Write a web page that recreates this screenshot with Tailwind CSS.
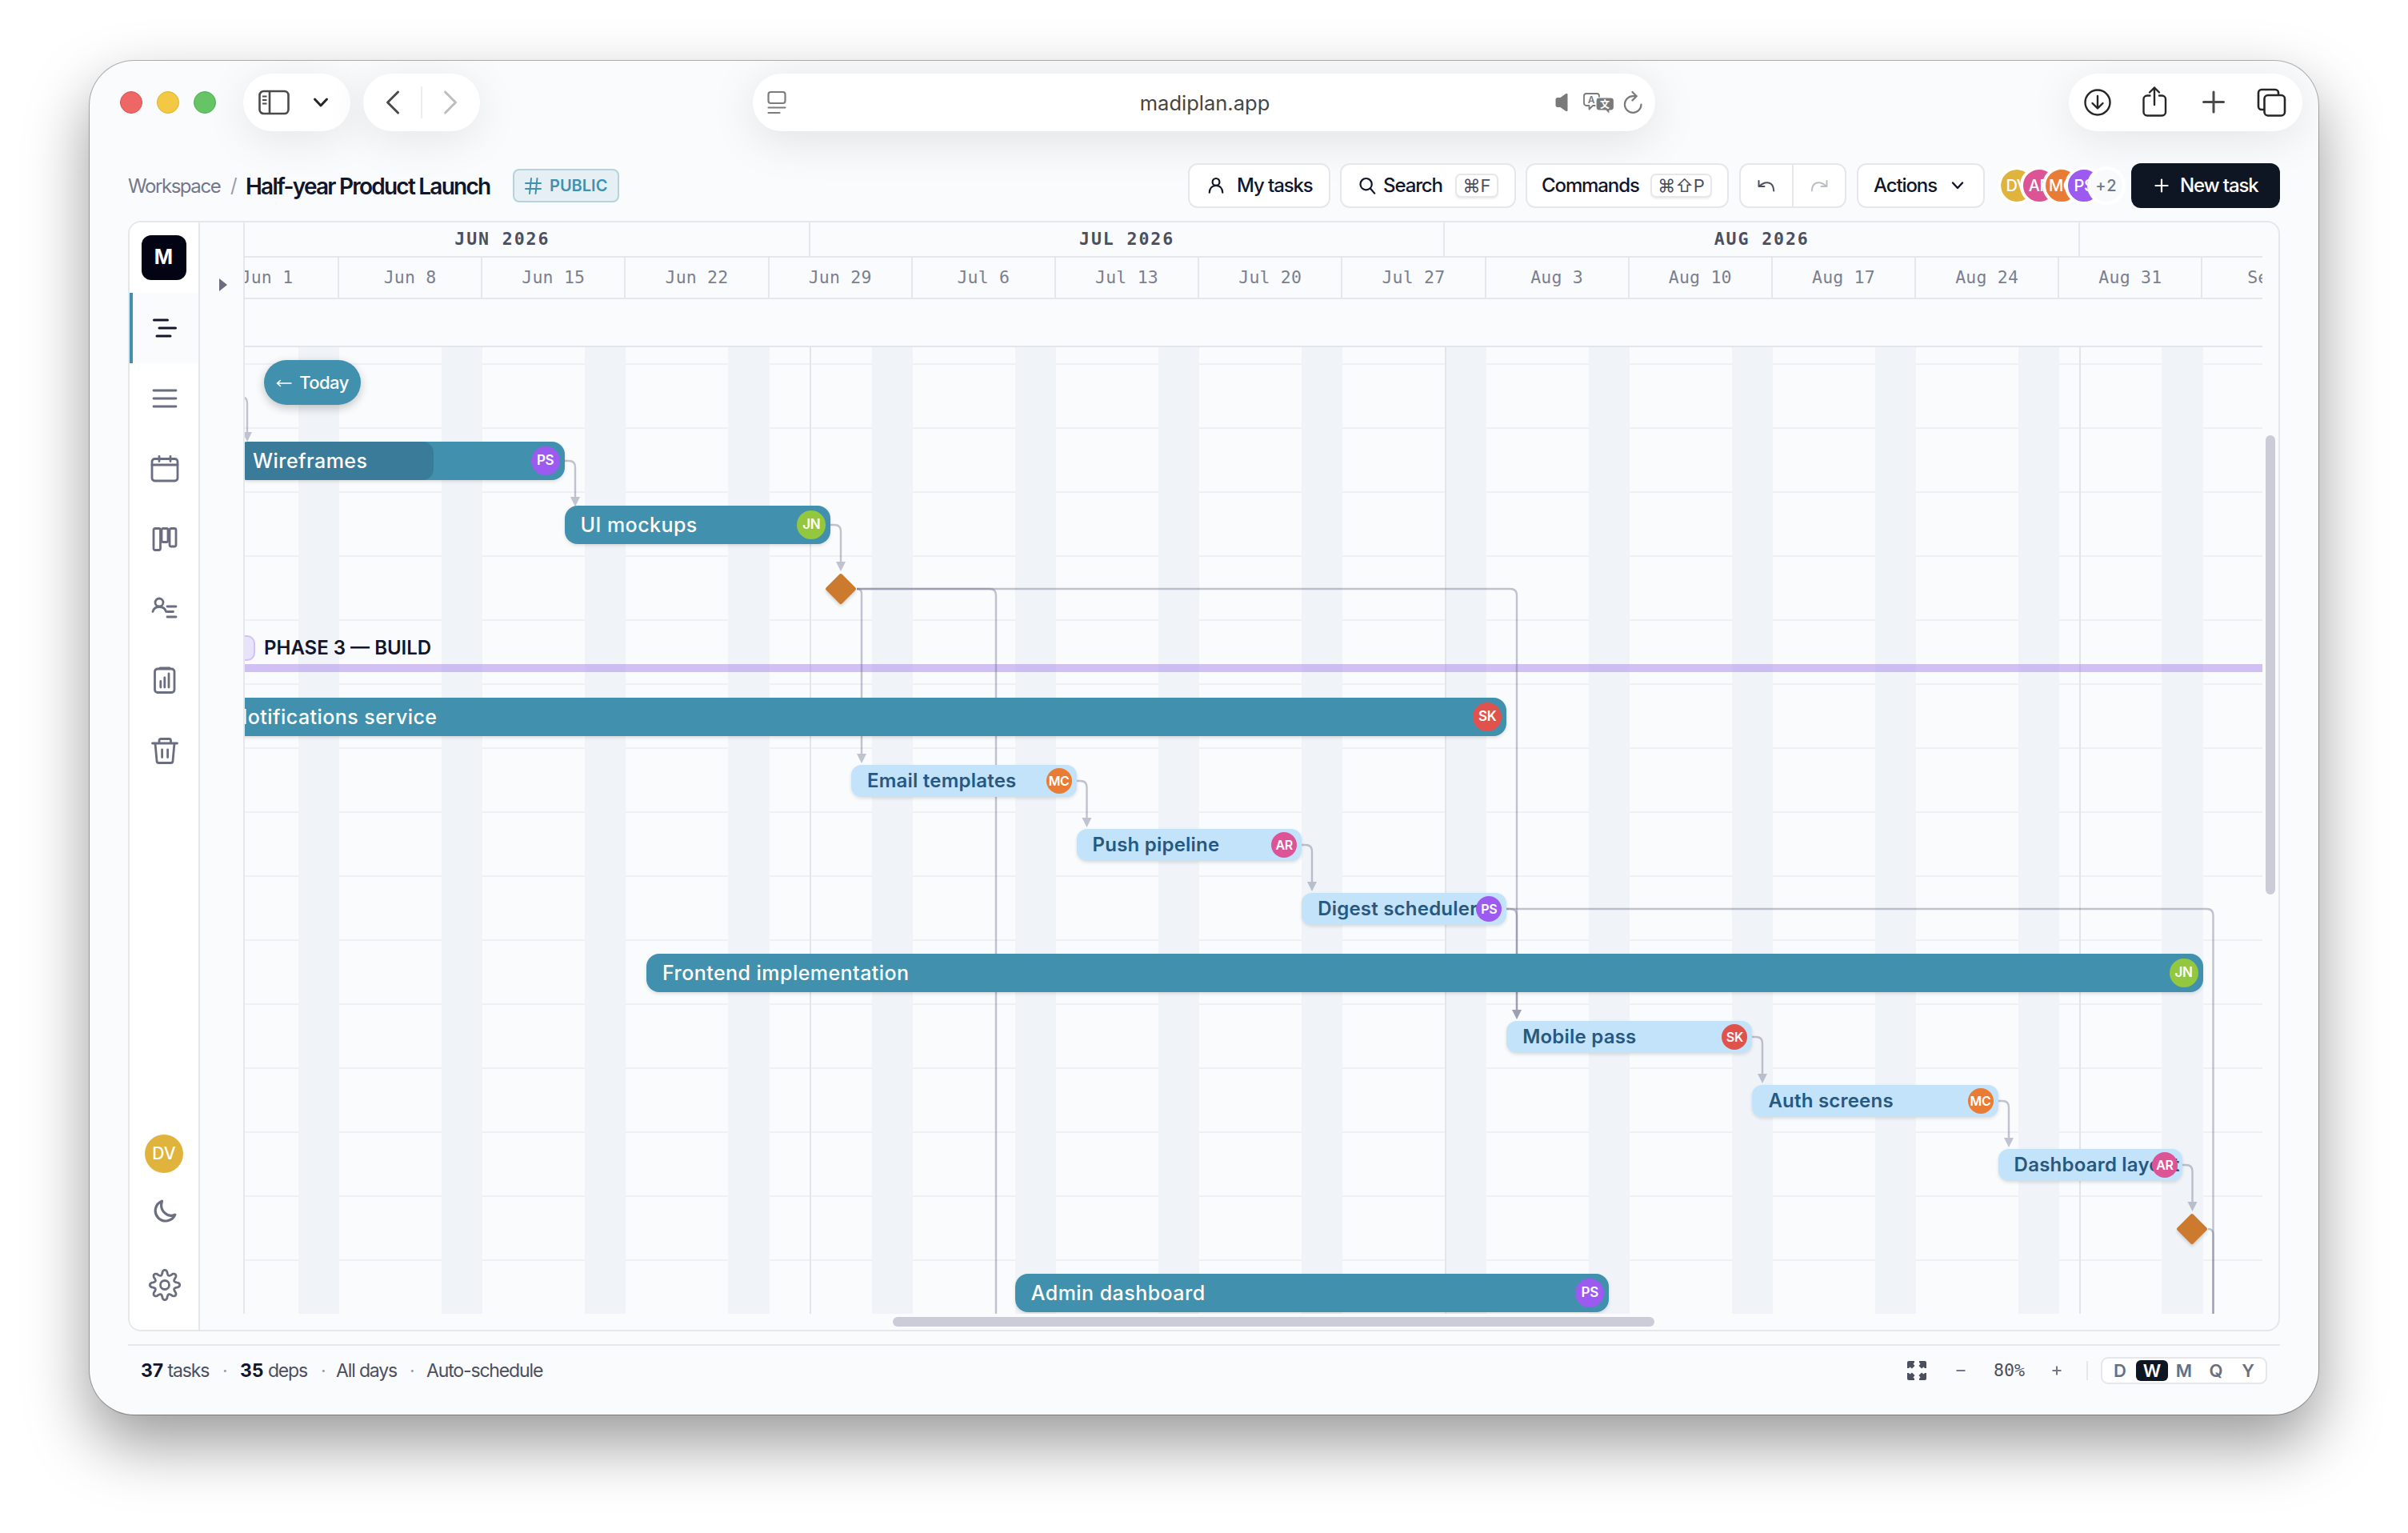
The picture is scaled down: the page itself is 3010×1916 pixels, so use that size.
<!DOCTYPE html>
<html lang="en">
<head>
  <meta charset="UTF-8" />
  <meta name="viewport" content="width=device-width, initial-scale=1.0"/>
  <title>Half-year Product Launch | Madiplan</title>
  <script src="https://cdn.jsdelivr.net/npm/@tailwindcss/browser@4"></script>
</head>
<body class="bg-white w-[3010px] h-[1916px] overflow-hidden pt-[76px] pl-[112px] font-['Inter',sans-serif] text-[#11162a]">
  <div class="w-[2786px] h-[1692px] rounded-[56px] bg-[#fafbfd] overflow-hidden shadow-[0_0_0_1px_rgba(0,0,0,0.28),0_36px_80px_rgba(0,0,0,0.4)]">

    <!-- Browser toolbar -->
    <div class="flex h-[128px] pt-4 pl-[38px] pr-5">
      <div class="flex items-center gap-[18px] h-[72px]">
        <span class="size-7 rounded-full bg-[#ec6765] border border-[#d9524f]"></span>
        <span class="size-7 rounded-full bg-[#f3c944] border border-[#dcb02e]"></span>
        <span class="size-7 rounded-full bg-[#65c466] border border-[#4fb050]"></span>
      </div>

      <div class="ml-[34px] flex items-center h-[72px] w-[134px] rounded-full bg-white pl-[19px] shadow-[0_10px_56px_rgba(0,0,0,0.09)]">
        <svg class="w-10 h-8" viewBox="0 0 40 32" fill="none" stroke="#4a4a4a" stroke-width="2.6">
          <rect x="1.5" y="2" width="36" height="28" rx="5"/>
          <path d="M14 2v28"/>
          <path d="M5 8.5h5.5M5 13h5.5M5 17.5h5.5" stroke-width="1.8"/>
        </svg>
        <svg class="w-5 h-4 ml-7" viewBox="0 0 20 16" fill="none" stroke="#262626" stroke-width="3" stroke-linecap="round" stroke-linejoin="round"><path d="M2.5 4l7.500 8 7.500-8"/></svg>
      </div>

      <div class="ml-4 flex items-center justify-between h-[72px] w-[146px] rounded-full bg-white px-[28px] shadow-[0_10px_56px_rgba(0,0,0,0.09)]">
        <svg class="w-[18px] h-8" viewBox="0 0 18 32" fill="none" stroke="#4a4a4a" stroke-width="3" stroke-linecap="round" stroke-linejoin="round"><path d="M15.500 3L2.500 16l13 13"/></svg>
        <span class="w-0.5 h-10 bg-[#ededee]"></span>
        <svg class="w-[18px] h-8" viewBox="0 0 18 32" fill="none" stroke="#bdbdbf" stroke-width="3" stroke-linecap="round" stroke-linejoin="round"><path d="M2.500 3l13 13-13 13"/></svg>
      </div>

      <div class="ml-[341px] flex items-center h-[72px] w-[1128px] rounded-full bg-white pl-[18px] pr-4 shadow-[0_10px_60px_rgba(0,0,0,0.11)]">
        <svg class="w-6 h-8" viewBox="0 0 24 32" fill="none" stroke="#7c7c7c" stroke-width="2.2" stroke-linecap="round"><rect x="1.500" y="3" width="21" height="14" rx="3"/><path d="M1.500 22.500h21M1.500 29h14"/></svg>
        <span class="flex-1 text-center text-[25.500px] text-[#454545] pl-[85px] pt-0.5 tracking-[0]">madiplan.app</span>
        <svg class="w-4 h-6" viewBox="0 0 16 24" fill="#7a7a7a"><path d="M3 6h3.500L13 1.300c1.200-.8 2.500-.4 2.500 1v19.400c0 1.400-1.300 1.800-2.500 1L6.500 18H3c-1.500 0-2.500-1-2.500-2.500v-7C.5 7 1.500 6 3 6z"/></svg>
        <svg class="w-10 h-8 ml-[18px]" viewBox="0 0 40 32">
          <path d="M5 5h13a3 3 0 0 1 3 3v9a3 3 0 0 1-3 3h-5l-4.500 4.500V20H5a3 3 0 0 1-3-3V8a3 3 0 0 1 3-3z" fill="none" stroke="#7a7a7a" stroke-width="1.8" stroke-linejoin="round"/>
          <path d="M21 10h14.500a4 4 0 0 1 4 4v8a4 4 0 0 1-4 4H34v5l-5-5h-8a4 4 0 0 1-4-4v-8a4 4 0 0 1 4-4z" fill="#7a7a7a" stroke="#fff" stroke-width="1.2"/>
          <text x="11" y="17" font-size="12" font-weight="600" text-anchor="middle" fill="#7a7a7a">A</text>
          <text x="28" y="22.500" font-size="12" font-weight="700" font-family="Noto Sans CJK SC, sans-serif" text-anchor="middle" fill="#fff">文</text>
        </svg>
        <svg class="w-6 h-8 ml-[11px]" viewBox="0 0 24 32" fill="none" stroke="#7a7a7a" stroke-width="2.2" stroke-linecap="round" stroke-linejoin="round"><path d="M22.500 18.500a10.300 10.300 0 1 1-10.300-10.300h4.500M11.500 3l5.200 5.200-5.200 5.200"/></svg>
      </div>

      <div class="ml-auto flex items-center h-[72px] w-[292px] rounded-full bg-white pl-[17px] shadow-[0_10px_56px_rgba(0,0,0,0.09)]">
        <svg class="size-10 mb-1" viewBox="0 0 40 40" fill="none" stroke="#262626" stroke-width="2.4" stroke-linecap="round" stroke-linejoin="round"><circle cx="19" cy="22" r="15.5"/><path d="M19 14v15M12.500 23l6.500 6.500 6.500-6.500"/></svg>
        <svg class="size-10 mb-1 ml-[31px]" viewBox="0 0 40 40" fill="none" stroke="#262626" stroke-width="2.4" stroke-linecap="round" stroke-linejoin="round"><path d="M13.500 13.500H10A4.500 4.500 0 0 0 5.500 18v16a4.500 4.500 0 0 0 4.500 4.500h18.500A4.500 4.500 0 0 0 33 34V18a4.500 4.500 0 0 0-4.500-4.500H25M19 25V3.500M13 9.500l6-6 6 6"/></svg>
        <svg class="size-10 mb-1 ml-[34px]" viewBox="0 0 40 40" fill="none" stroke="#4a4a4a" stroke-width="3" stroke-linecap="round"><path d="M19 9v25M6.500 21.500h25"/></svg>
        <svg class="size-10 mb-1 ml-8" viewBox="0 0 40 40" fill="none" stroke="#262626" stroke-width="2.6" stroke-linejoin="round"><rect x="10.500" y="13" width="25.500" height="25.500" rx="4.500"/><path d="M10.500 31H7a4 4 0 0 1-4-4V10a4 4 0 0 1 4-4h17a4 4 0 0 1 4 4v3"/></svg>
      </div>
    </div>

    <!-- Page header -->
    <div class="relative flex items-center h-14 pl-12 pr-12 font-medium text-[24px]">
      <span class="w-[128px] text-[24px] font-normal text-[#74778a] tracking-[-0.06em] pt-0.5">Workspace</span>
      <span class="w-[19px] text-[24px] font-normal text-[#9a9ca8]">/</span>
      <h1 class="w-[334px] text-[28px] font-semibold tracking-[-0.063em] whitespace-nowrap pt-0.5">Half-year Product Launch</h1>
      <span class="flex items-center h-[42px] w-[133px] rounded-[8px] border-2 border-[#b5d3dd] bg-[#e6f0f4] text-[#4190ae] pl-[13px] gap-[10px] text-[20px] font-semibold tracking-[0]">
        <svg class="size-[21px]" viewBox="0 0 21 21" fill="none" stroke="#4190ae" stroke-width="2" stroke-linecap="round"><path d="M1 7h19M1 14h19M8 1L6 20M15.500 1l-2 19"/></svg>
        PUBLIC
      </span>

      <div class="ml-auto flex items-center whitespace-nowrap tracking-[-0.046em]">
        <button class="flex items-center h-14 w-[178px] rounded-xl border-2 border-[#e5e7eb] bg-white pl-[22px] gap-[15px]">
          <svg class="size-[22px]" viewBox="0 0 24 24" fill="none" stroke="#11162a" stroke-width="2.4" stroke-linecap="round"><circle cx="12" cy="7" r="4.8"/><path d="M3 21.500c0-5.500 3.500-9.700 9-9.700s9 4.200 9 9.700"/></svg>
          My tasks
        </button>
        <button class="ml-3 flex items-center h-14 w-[220px] rounded-xl border-2 border-[#e5e7eb] bg-white pl-[21px]">
          <svg class="size-[22px]" viewBox="0 0 24 24" fill="none" stroke="#11162a" stroke-width="2.4" stroke-linecap="round"><circle cx="10.500" cy="10" r="7.8"/><path d="M16.500 16l5.500 6.500"/></svg>
          <span class="ml-[9px] w-[90px] text-left">Search</span>
          <kbd class="h-[30px] w-[54px] rounded-[7px] border-2 border-[#e5e7eb] shadow-[0_2px_2px_rgba(0,0,0,0.06)] text-center text-[22px] leading-[27px] font-normal text-[#4b4f60] font-['Inter',sans-serif] tracking-[0]">⌘F</kbd>
        </button>
        <button class="ml-3 flex items-center h-14 w-[254px] rounded-xl border-2 border-[#e5e7eb] bg-white pl-[18px]">
          <span class="w-[136px] text-left">Commands</span>
          <kbd class="h-[30px] w-[77px] rounded-[7px] border-2 border-[#e5e7eb] shadow-[0_2px_2px_rgba(0,0,0,0.06)] text-center text-[22px] leading-[27px] font-normal text-[#4b4f60] font-['Inter',sans-serif] tracking-[0]">⌘⇧P</kbd>
        </button>
        <div class="ml-[13px] flex h-14 w-[134px] rounded-xl border-2 border-[#e5e7eb] bg-white">
          <button class="flex-1 flex items-center justify-center border-r-2 border-[#e5e7eb]">
            <svg class="w-6 h-5" viewBox="0 0 24 20" fill="none" stroke="#4b4f60" stroke-width="2" stroke-linecap="round" stroke-linejoin="round"><path d="M2.500 4v7h7M3 11c4-4 8-5.500 12-4.500 4 1 6 4.500 6.200 10"/></svg>
          </button>
          <button class="flex-1 flex items-center justify-center">
            <svg class="w-6 h-5" viewBox="0 0 24 20" fill="none" stroke="#bcbec6" stroke-width="2" stroke-linecap="round" stroke-linejoin="round"><path d="M21.500 4v7h-7M21 11c-4-4-8-5.500-12-4.500-4 1-6 4.500-6.200 10"/></svg>
          </button>
        </div>
        <button class="ml-[13px] flex items-center h-14 w-[160px] rounded-xl border-2 border-[#e5e7eb] bg-white pl-[19px]">
          <span class="w-[97px] text-left">Actions</span>
          <svg class="w-4 h-3" viewBox="0 0 16 12" fill="none" stroke="#11162a" stroke-width="2.4" stroke-linecap="round" stroke-linejoin="round"><path d="M2 2.500l6 6.500 6-6.500"/></svg>
        </button>
        <div class="ml-4 flex text-[20px] tracking-[-0.02em] text-white">
          <span class="flex items-center justify-center size-12 rounded-full border-4 border-white bg-[#e0b43c] bg-clip-padding">DV</span>
          <span class="-ml-5 flex items-center justify-center size-12 rounded-full border-4 border-white bg-[#dc5496]">AR</span>
          <span class="-ml-5 flex items-center justify-center size-12 rounded-full border-4 border-white bg-[#e87c34]">MC</span>
          <span class="-ml-5 flex items-center justify-center size-12 rounded-full border-4 border-white bg-[#9d5af0]">PS</span>
          <span class="-ml-5 flex items-center justify-center size-12 rounded-full border-4 border-white bg-[#f9fafc] text-[#74778a] tracking-[0.06em]">+2</span>
        </div>
        <button class="ml-[7px] flex items-center h-14 w-[186px] rounded-xl bg-[#0f1623] text-white pl-[29px] gap-[14px]">
          <svg class="size-[18px]" viewBox="0 0 18 18" fill="none" stroke="#fff" stroke-width="2.2" stroke-linecap="round"><path d="M9 1.500v15M1.500 9h15"/></svg>
          New task
        </button>
      </div>
    </div>

    <!-- Main panel -->
    <div class="relative mt-4 ml-12 flex w-[2690px] h-[1388px] rounded-[16px] border-2 border-[#e5e7eb] overflow-hidden">

      <!-- Sidebar -->
      <nav class="flex flex-col items-center w-[88px] bg-white border-r-2 border-[#e5e7eb] pt-4">
        <div class="size-14 -ml-px rounded-xl bg-[#020414] text-white text-[25px] font-bold flex items-center justify-center">M</div>
        <a class="mt-4 flex items-center justify-center w-full h-[88px] border-l-4 border-[#4190ae] bg-[#fafbfd]">
          <svg class="size-10 -ml-[3px]" viewBox="0 0 40 40" fill="none" stroke="#11162a" stroke-width="3" stroke-linecap="round"><path d="M6.500 10h17M13 20h20.500M10 30h17"/></svg>
        </a>
        <a class="flex items-center justify-center pl-px w-full h-[88px]">
          <svg class="size-10" viewBox="0 0 40 40" fill="none" stroke="#6b6e80" stroke-width="2.8" stroke-linecap="round"><path d="M6 10h28M6 20h28M6 30h28"/></svg>
        </a>
        <a class="flex items-center justify-center pl-px w-full h-[88px]">
          <svg class="size-10" viewBox="0 0 40 40" fill="none" stroke="#6b6e80" stroke-width="2.8" stroke-linecap="round"><rect x="4" y="7.500" width="32" height="27.500" rx="3.500"/><path d="M4 15h32M13 4.500v6M27 4.500v6"/></svg>
        </a>
        <a class="flex items-center justify-center pl-px w-full h-[88px]">
          <svg class="size-10" viewBox="0 0 40 40" fill="none" stroke="#6b6e80" stroke-width="2.8"><rect x="6" y="6.500" width="8.500" height="27" rx="2"/><rect x="16" y="6.500" width="8" height="17" rx="2"/><rect x="26" y="6.500" width="8" height="22.500" rx="2"/></svg>
        </a>
        <a class="flex items-center justify-center pl-px w-full h-[88px]">
          <svg class="size-10" viewBox="0 0 40 40" fill="none" stroke="#6b6e80" stroke-width="2.8" stroke-linecap="round"><circle cx="13" cy="11" r="5"/><path d="M5 22.500c1-3.800 4-6 8-6 4.500 0 7.500 2 8.500 6M23 16h11M23 22.500h7.500M23 29h11"/></svg>
        </a>
        <a class="flex items-center justify-center pl-px w-full h-[88px]">
          <svg class="size-10" viewBox="0 0 40 40" fill="none" stroke="#6b6e80" stroke-width="2.8" stroke-linecap="round"><rect x="7.500" y="6" width="24.500" height="29.500" rx="3.500"/><path d="M14 5h12" stroke-width="3.2"/><path d="M14.800 21.500V29M19.800 17v12M25 12v17"/></svg>
        </a>
        <a class="flex items-center justify-center pl-px w-full h-[88px]">
          <svg class="size-10" viewBox="0 0 40 40" fill="none" stroke="#6b6e80" stroke-width="2.8" stroke-linecap="round" stroke-linejoin="round"><path d="M4.500 11h31M13 10.500V7.500a2 2 0 0 1 2-2h10.500a2 2 0 0 1 2 2v3M8 11l2 22a2.500 2.500 0 0 0 2.500 2.500h15A2.500 2.500 0 0 0 30 33l2-22M16.600 19v9.500M23.600 19v9.500"/></svg>
        </a>
        <div class="mt-auto mb-[34px] flex flex-col items-center">
          <span class="size-12 rounded-full bg-[#e0b43c] text-white text-[21px] font-medium flex items-center justify-center">DV</span>
          <svg class="size-10 mt-[27px] ml-px" viewBox="0 0 40 40" fill="none" stroke="#6b6e80" stroke-width="3.2" stroke-linejoin="round"><path d="M16.500 8.200A12.800 12.800 0 1 0 32.800 25.200C24 29.500 12.500 20.500 16.500 8.200z"/></svg>
          <svg class="size-11 mt-[51px] ml-px" viewBox="-22 -22 44 44" fill="none" stroke="#6b6e80" stroke-width="2.8" stroke-linejoin="round"><path id="gear"/><circle r="5.500"/></svg>
        </div>
      </nav>

      <!-- Collapsed task list -->
      <div class="w-[56px] h-[1364px] border-r-2 border-[#e5e7eb] pt-[70px] pl-6">
        <svg class="w-[10px] h-4" viewBox="0 0 10 16" fill="#6b6e80"><path d="M0 0l10 8-10 8z"/></svg>
      </div>

      <!-- Timeline -->
      <div class="w-[2522px] overflow-hidden">
        <div id="months" class="flex h-11 border-b-2 border-[#e5e7eb] -ml-[61.2px] w-[4000px]"></div>
        <div id="weeks" class="flex h-[52px] border-b-2 border-[#e5e7eb] -ml-[61.2px] w-[4000px]"></div>
        <div class="h-[60px] border-b-2 border-[#e2e5ec]"></div>
        <div id="canvas" class="relative h-[1208px] overflow-hidden">
          <div id="grid"></div>
          <!-- Phase row -->
          <div class="absolute -left-20 top-[360px] w-[93px] h-8 rounded-[10px] border-2 border-[#cfc2f5] bg-[#e9e2fb]"></div>
          <div class="absolute left-6 top-[360px] h-8 leading-8 text-[24px] font-semibold whitespace-nowrap">PHASE 3 — BUILD</div>
          <div class="absolute left-0 top-[396px] w-full h-[10px] bg-[#a585ec]/50"></div>
          <svg id="deps" class="absolute left-0 top-0 w-[2522px] h-[1208px]" viewBox="306 434 2522 1208" fill="none"></svg>
          <div id="bars"></div>
          <div class="absolute left-6 top-4 w-[121px] h-14 rounded-full bg-[#4190ae] text-white text-[22px] font-medium flex items-center justify-center gap-[9px] tracking-[-0.025em] shadow-[0_4px_12px_rgba(0,0,0,0.22)]">
            <svg class="w-5 h-3 mt-0.5" viewBox="0 0 20 12" fill="none" stroke="#fff" stroke-width="1.5" stroke-linecap="round"><path d="M19 6H1.500M5.500 2.500L1.500 6l4 3.500"/></svg>
            Today
          </div>
        </div>
        <div class="h-5 pt-1 pl-[810px]">
          <div class="w-[952px] h-3 rounded-full bg-[#cacdd8]"></div>
        </div>
      </div>

      <div class="w-5 pt-[266px] pl-1">
        <div class="w-3 h-[574px] rounded-full bg-[#cacdd8]"></div>
      </div>
    </div>

    <!-- Status bar -->
    <div class="mt-4 ml-12 w-[2690px] flex items-center h-[64px] border-t-2 border-[#e5e7eb] pl-4 pr-4 text-[23px] text-[#4b4f60] tracking-[-0.05em] whitespace-nowrap">
      <span class="w-[102px]"><b class="font-bold text-[#11162a] tracking-[0]">37</b> tasks</span>
      <span class="w-[22px] text-[#9a9ca8]">·</span>
      <span class="w-[101px]"><b class="font-bold text-[#11162a] tracking-[0]">35</b> deps</span>
      <span class="w-[19px] text-[#9a9ca8]">·</span>
      <span class="w-[92px]">All days</span>
      <span class="w-[21px] text-[#9a9ca8]">·</span>
      <span>Auto-schedule</span>

      <svg class="ml-auto size-6" viewBox="0 0 24 24" fill="#4b4f60"><path d="M2 0h7v2L7.500 3.500 9.500 6 6 9.500 3.500 7.500 2 9H0V2a2 2 0 0 1 2-2zM22 0h-7v2l1.500 1.500L14.500 6 18 9.500l2.500-2L22 9h2V2a2 2 0 0 0-2-2zM2 24h7v-2l-1.500-1.500 2-2.500L6 14.500l-2.500 2L2 15H0v7a2 2 0 0 0 2 2zM22 24h-7v-2l1.500-1.500-2-2.500 3.500-3.500 2.500 2L22 15h2v7a2 2 0 0 1-2 2z"/></svg>
      <svg class="ml-[37px] w-3 h-3" viewBox="0 0 12 12" stroke="#74778a" stroke-width="2"><path d="M.5 6h11"/></svg>
      <span class="ml-[35px] w-[40px] text-[21.500px] font-['DejaVu_Sans_Mono',monospace] tracking-[0]">80%</span>
      <svg class="ml-[33px] w-3 h-3" viewBox="0 0 12 12" stroke="#74778a" stroke-width="2"><path d="M.5 6h11M6 .5v11"/></svg>
      <span class="ml-[31px] w-0.5 h-6 bg-[#e5e7eb]"></span>
      <div class="ml-4 flex items-center h-[34px] w-[208px] rounded-[9px] border-2 border-[#e5e7eb] bg-white px-0.5 text-[22px] font-semibold text-[#6b6e80] tracking-[0]">
        <span class="w-10 text-center">D</span>
        <span class="w-10 h-[26px] leading-[26px] text-center rounded-[6px] bg-[#0f1623] text-white">W</span>
        <span class="w-10 text-center">M</span>
        <span class="w-10 text-center">Q</span>
        <span class="w-10 text-center">Y</span>
      </div>
    </div>
  </div>

  <script>
    const DAY = 25.6;        // px per day
    const START = -61.2;     // x of Jun 1 inside the canvas
    const ROW = 80;

    const months = [["JUN 2026", 30], ["JUL 2026", 31], ["AUG 2026", 31], ["", 30]];
    const weeks = ["Jun 1", "Jun 8", "Jun 15", "Jun 22", "Jun 29", "Jul 6", "Jul 13", "Jul 20", "Jul 27",
      "Aug 3", "Aug 10", "Aug 17", "Aug 24", "Aug 31", "Sep 7"];

    const people = {
      PS: "bg-[#9d5af0]",
      JN: "bg-[#93c83e]",
      SK: "bg-[#e0524c]",
      MC: "bg-[#e87c34]",
      AR: "bg-[#dc5496]"
    };

    const tasks = [
      { row: 0, from: 2, to: 18, name: "Wireframes", who: "PS", done: 246 },
      { row: 1, from: 18, to: 31, name: "UI mockups", who: "JN" },
      { row: 4, from: 1, to: 64, name: "Notifications service", who: "SK" },
      { row: 5, from: 32, to: 43, name: "Email templates", who: "MC", sub: true },
      { row: 6, from: 43, to: 54, name: "Push pipeline", who: "AR", sub: true },
      { row: 7, from: 54, to: 64, name: "Digest scheduler", who: "PS", sub: true },
      { row: 8, from: 22, to: 98, name: "Frontend implementation", who: "JN" },
      { row: 9, from: 64, to: 76, name: "Mobile pass", who: "SK", sub: true },
      { row: 10, from: 76, to: 88, name: "Auth screens", who: "MC", sub: true },
      { row: 11, from: 88, to: 97, name: "Dashboard layout", who: "AR", sub: true },
      { row: 13, from: 40, to: 69, name: "Admin dashboard", who: "PS" }
    ];

    const milestones = [{ x: 745, row: 2 }, { x: 2434, row: 12 }];

    // [x1, y1, x2, y2, arrow], arrow only when the target is in view
    const links = [
      [280, 496, 309, 552, true],
      [706, 576, 719, 633, true],
      [1038, 656, 1051, 714, true],
      [1071, 736, 1077, 954, true],
      [1071, 736, 1245, 1660, false],
      [1071, 736, 1896, 1274, true],
      [1346, 976, 1358.5, 1034, true],
      [1627, 1056, 1640, 1114, true],
      [1883, 1136, 1896, 1274, true],
      [1883, 1136, 2766.5, 1660, false],
      [2190, 1296, 2203, 1354, true],
      [2498, 1376, 2511, 1434, true],
      [2728, 1456, 2740.5, 1514, true],
      [2760, 1536, 2766.5, 1660, false]
    ];

    document.getElementById("months").innerHTML = months.map(([name, days]) =>
      `<div class="shrink-0 border-r-2 border-[#e5e7eb] text-center text-[21.500px] leading-[42px] font-bold text-[#4b4f60] tracking-[0.09em] font-['DejaVu_Sans_Mono',monospace]" style="width:${days * DAY}px">${name}</div>`).join("");

    document.getElementById("weeks").innerHTML = weeks.map(name =>
      `<div class="shrink-0 w-[179.2px] border-r-2 border-[#e5e7eb] text-center text-[21.500px] leading-[50px] tracking-[0.01em] text-[#7c7f90] font-['DejaVu_Sans_Mono',monospace]">${name}</div>`).join("");

    let grid = "";
    for (let y = 20; y < 1208; y += ROW) {
      grid += `<div class="absolute left-0 w-full h-0.5 bg-[#eef0f3]" style="top:${y}px"></div>`;
    }
    for (let w = 0; w < 14; w++) {
      grid += `<div class="absolute top-0 h-full w-[51.2px] bg-[#f0f4f8]" style="left:${START + (w * 7 + 5) * DAY}px"></div>`;
    }
    [30, 61, 92].forEach(d => {
      grid += `<div class="absolute top-0 h-full w-0.5 bg-[#e2e5ea]" style="left:${START + d * DAY - 0.8}px"></div>`;
    });
    document.getElementById("grid").innerHTML = grid;

    let bars = "";
    tasks.forEach(t => {
      const h = t.sub ? 40 : 48;
      const left = START + t.from * DAY;
      const box = `left:${left}px;top:${142 + t.row * ROW - h / 2}px;width:${(t.to - t.from) * DAY}px`;
      const done = t.done ? `<div class="absolute left-0 top-0 h-full rounded-[14px] bg-[#3a7b99]" style="width:${t.done}px"></div>` : "";
      if (t.sub) {
        bars += `<div class="absolute h-10 rounded-[13px] bg-[#c3e3fb] shadow-[0_2px_4px_rgba(0,0,0,0.12)] flex items-center pl-5 text-[24px] font-semibold text-[#27587f] whitespace-nowrap tracking-[0.009em]" style="${box}">${t.name}
          <span class="absolute right-[6px] top-1 size-8 rounded-full ${people[t.who]} text-white text-[16px] font-semibold tracking-[-0.02em] flex items-center justify-center">${t.who}</span></div>`;
      } else {
        bars += `<div class="absolute h-12 rounded-[16px] bg-[#4190ae] shadow-[0_2px_4px_rgba(0,0,0,0.12)] text-[25px] font-medium text-white whitespace-nowrap tracking-[0.018em]" style="${box}">${done}
          <span class="absolute left-5 top-0 leading-[49px]">${t.name}</span>
          <span class="absolute right-[6px] top-1.5 size-9 rounded-full ${people[t.who]} text-white text-[17px] font-semibold tracking-[-0.02em] flex items-center justify-center">${t.who}</span></div>`;
      }
    });
    milestones.forEach(m => {
      bars += `<div class="absolute size-7 -ml-3.5 -mt-3.5 rotate-45 rounded-[2px] bg-[#cc7a2e] shadow-[2px_2px_4px_rgba(0,0,0,0.15)]" style="left:${m.x}px;top:${142 + m.row * ROW}px"></div>`;
    });
    document.getElementById("bars").innerHTML = bars;

    document.getElementById("deps").innerHTML = links.map(([x1, y1, x2, y2, arrow]) => {
      const r = Math.min(8, x2 - x1);
      const end = arrow ? y2 - 12 : y2;
      const head = arrow ? `<path d="M${x2 - 6} ${y2 - 12}h12l-6 12z" fill="#6e7290" fill-opacity="0.42"/>` : "";
      return `<path d="M${x1} ${y1}H${x2 - r}Q${x2} ${y1} ${x2} ${y1 + r}V${end}" stroke="#6e7290" stroke-opacity="0.42" stroke-width="2.4"/>${head}`;
    }).join("");

    // settings cog with eight rounded teeth
    let gear = "";
    for (let i = 0; i <= 240; i++) {
      const a = i / 240 * Math.PI * 2;
      const wave = Math.cos(8 * a);
      const rad = 15.7 + 3 * Math.sign(wave) * Math.pow(Math.abs(wave), 0.7);
      gear += (i ? "L" : "M") + (rad * Math.cos(a)).toFixed(2) + " " + (rad * Math.sin(a)).toFixed(2);
    }
    document.getElementById("gear").setAttribute("d", gear + "z");
  </script>
</body>
</html>
